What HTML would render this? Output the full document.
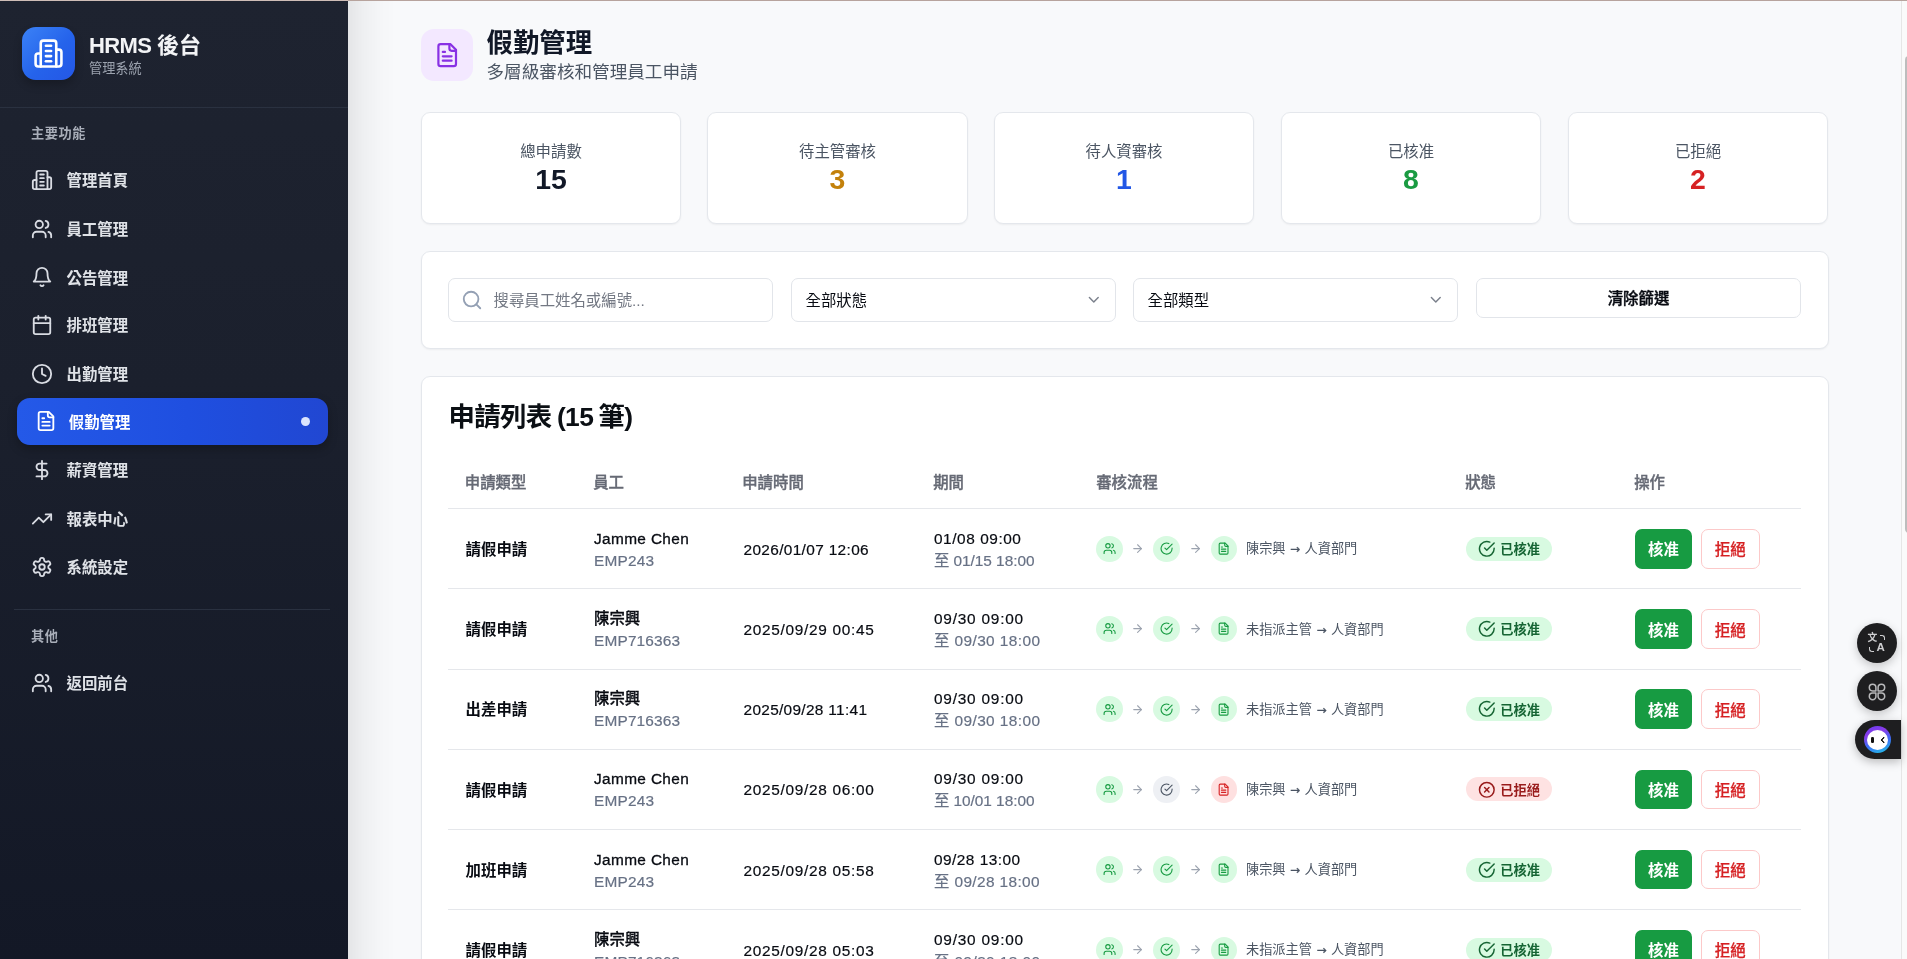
<!DOCTYPE html>
<html lang="zh-Hant">
<head>
<meta charset="utf-8">
<title>HRMS 後台 - 假勤管理</title>
<style>
*{box-sizing:border-box;margin:0;padding:0}
html,body{width:1907px;height:959px;overflow:hidden}
body{position:relative;background:#f8f9fb;font-family:"Liberation Sans","Noto Sans CJK TC",sans-serif;color:#0f1419;-webkit-font-smoothing:antialiased}
svg{display:block}
.ic{fill:none;stroke:currentColor;stroke-width:2;stroke-linecap:round;stroke-linejoin:round}
.abs{position:absolute}
/* top line */
#topline{position:absolute;left:0;top:0;width:1907px;height:1px;background:linear-gradient(90deg,#cfbdb7 0,#cfbdb7 348px,#b7a39d 348px,#b7a39d 100%);z-index:50}
/* sidebar */
#sb{will-change:transform;position:absolute;left:0;top:0;width:348px;height:959px;background:linear-gradient(180deg,#1e2330 0%,#1b202d 40%,#131826 100%);z-index:10}
#sbshadow{position:absolute;left:348px;top:0;width:60px;height:959px;background:linear-gradient(90deg,rgba(0,0,0,.08) 0%,rgba(0,0,0,.04) 25%,rgba(0,0,0,.012) 55%,rgba(0,0,0,0) 80%);z-index:9;pointer-events:none}
#logo{position:absolute;left:22px;top:27px;width:53px;height:53px;border-radius:14px;background:linear-gradient(135deg,#3b82f6 0%,#2563eb 55%,#2457e6 100%);box-shadow:0 5px 9px rgba(0,0,0,.22);color:#fff}
#logo svg{position:absolute;left:11px;top:11px;width:31px;height:31px}
#brand{position:absolute;left:89px;top:32.5px;font-size:22px;line-height:26px;font-weight:700;color:#f3f4f6;white-space:nowrap;letter-spacing:-.6px}
#brand span{letter-spacing:0}
#brandsub{position:absolute;left:89px;top:60px;font-size:13.2px;line-height:18px;color:#9ca3af;white-space:nowrap}
#sbline1{position:absolute;left:0;top:107px;width:348px;height:1px;background:#2a3140}
.sec{position:absolute;left:31px;font-size:13.2px;line-height:18px;font-weight:700;color:#a9aeb9;white-space:nowrap;letter-spacing:.6px;margin-top:1.2px}
.nav{position:absolute;left:17px;width:311px;height:47px;border-radius:13px;color:#d9dce3}
.nav svg{position:absolute;left:14px;top:12.5px;width:22px;height:22px}
.nav b{position:absolute;left:49.5px;top:12.8px;font-size:15.4px;line-height:23px;font-weight:700;white-space:nowrap;color:#dfe2e7}
.nav.on{background:linear-gradient(90deg,#2459e8 0%,#1f4fe0 55%,#2147d2 100%);color:#fff;box-shadow:0 4px 10px rgba(0,0,0,.25)}
.nav.on svg{left:17.5px;top:12.2px}
.nav.on b{left:51.8px;color:#fff}
.nav.on i{position:absolute;left:284.4px;top:19px;width:9px;height:9px;border-radius:50%;background:#dbe4fd}
#sbline2{position:absolute;left:14px;top:609px;width:316px;height:1px;background:#2a3140}
/* scrollbar + floaters */
#sbar{position:absolute;left:1901px;top:0;width:6px;height:959px;background:#fafafa;border-left:1px solid #e6e6e6;z-index:20}
#sbar i{position:absolute;left:3px;top:56px;width:10px;height:477px;border-radius:4px;background:#bdbdbd}
.fb{position:absolute;left:1857px;width:40px;height:40px;border-radius:50%;background:#1e1e20;box-shadow:0 3px 10px rgba(0,0,0,.22);z-index:30;color:#cfcfd1;will-change:transform}
.fb svg{position:absolute;left:10px;top:10.5px;width:20px;height:20px}
.fb span{position:absolute;font-family:"Liberation Sans","Noto Sans CJK TC",sans-serif;line-height:1;font-weight:700}
.fb .t1{left:10.5px;top:10.3px;font-size:9.8px}
.fb .t2{left:19.5px;top:18.5px;font-size:11.5px}
.fb u{position:absolute;width:5px;height:5px;border:1.5px solid #cfcfd1;text-decoration:none}
.fb .k1{left:23px;top:11.5px;border-left:0;border-bottom:0;border-top-right-radius:3px}
.fb .k2{left:11.5px;top:23.5px;border-right:0;border-top:0;border-bottom-left-radius:3px}
#pill{position:absolute;left:1855px;top:720px;width:46px;height:38.5px;border-radius:19.5px 0 0 19.5px;background:#1e1e20;box-shadow:0 3px 10px rgba(0,0,0,.25);z-index:30}
#av{position:absolute;left:9px;top:6px;width:27px;height:27px;border-radius:50%;background:linear-gradient(160deg,#6b3df0 5%,#8a3be8 30%,#3b6cf6 60%,#22c1e6 95%)}
#av b{position:absolute;left:3px;top:3.5px;width:21px;height:20px;border-radius:50%;background:#fff}
#av i{position:absolute;left:7px;top:11px;width:3.2px;height:5.6px;border-radius:1.2px;background:#111}
#av em{position:absolute;left:16.5px;top:10.8px;width:5.5px;height:5.5px;border-left:2.2px solid #111;border-bottom:2.2px solid #111;transform:rotate(45deg) scale(.85);border-radius:1px}
/* main */
#main{position:absolute;left:0;top:0;width:1901px;height:959px;overflow:hidden;will-change:transform}
#picon{position:absolute;left:421px;top:29px;width:52px;height:52px;border-radius:13px;background:#f3e8ff;color:#8831e4}
#picon svg{position:absolute;left:13px;top:13px;width:26.4px;height:26.4px}
#ptitle{position:absolute;left:486.5px;top:26.2px;font-size:26.4px;line-height:35px;font-weight:700;color:#111827;white-space:nowrap}
#psub{position:absolute;left:486.5px;top:59.2px;font-size:17.6px;line-height:26px;color:#4b5563;white-space:nowrap}
.card{position:absolute;background:#fff;border:1px solid #e4e7ec;border-radius:9px;box-shadow:0 1px 2px rgba(0,0,0,.05)}
.stat{top:112px;height:112px;text-align:center}
.sl{position:absolute;left:0;right:0;top:28px;font-size:15.4px;line-height:22px;color:#4b5563}
.sv{position:absolute;left:0;right:0;top:49px;font-size:28.4px;line-height:35px;font-weight:700}
#filter{left:421px;top:251px;width:1408px;height:98px}
.inp{position:absolute;top:26px;width:325px;height:44px;border:1px solid #e2e5ea;border-radius:7px;background:#fff;font-size:15.4px;line-height:22px;color:#080b12}
.inp .sico{position:absolute;left:12px;top:10px;width:22px;height:22px;color:#94a0b4}
.inp .sico svg{width:22px;height:22px}
.inp .ph{position:absolute;left:44.5px;top:11px;color:#737883;white-space:nowrap}
.inp .st{position:absolute;left:13.5px;top:11px;white-space:nowrap}
.inp .chev{position:absolute;right:12.2px;top:11.7px;width:17.6px;height:17.6px;color:#7b818c}
.inp.btn{height:40px;text-align:center;font-weight:500;line-height:40.5px;-webkit-text-stroke:.35px currentColor}
#list{left:421px;top:376px;width:1408px;height:700px;border-bottom-left-radius:0;border-bottom-right-radius:0}
#ltitle{position:absolute;left:26.5px;top:23px;font-size:26.4px;line-height:35px;font-weight:700;color:#0b0f14;white-space:nowrap;letter-spacing:-.6px;word-spacing:-1.5px}
#thead{position:absolute;left:26px;top:79px;width:1353px;height:53px;border-bottom:1px solid #e5e7eb;font-size:15.4px;color:#666a75;font-weight:500;-webkit-text-stroke:.35px currentColor}
#thead span{position:absolute;top:15.1px;margin-left:-.8px;line-height:23px;white-space:nowrap}
.row{position:absolute;left:26px;width:1353px;height:80.2px;border-bottom:1px solid #e5e7eb;font-size:15.4px;color:#080b12}
.row span{position:absolute;white-space:nowrap;line-height:22px}
.c1{left:17.6px;top:29.9px;font-weight:700}
.nm{left:146px;top:18.6px;font-weight:500;-webkit-text-stroke:.3px currentColor}
.nm.cj{font-weight:500;-webkit-text-stroke:.3px currentColor;top:18.4px}
.em{left:146px;top:40.6px;color:#677185;-webkit-text-stroke:.2px currentColor}
.ts{left:295.5px;top:29.6px;-webkit-text-stroke:.2px currentColor}
.p1{left:486px;top:18.6px;-webkit-text-stroke:.2px currentColor}
.p2{left:486px;top:40.6px;color:#677185;-webkit-text-stroke:.2px currentColor}
.fc{top:26.4px;width:26.4px;height:26.4px;border-radius:50%}
.fc svg{position:absolute;left:6.6px;top:6.6px;width:13.2px;height:13.2px}
.f1{left:648px;width:27px}.f1 svg{left:7.1px}
.f2{left:705px;width:27px}.f2 svg{left:7.3px}
.f3{left:762.9px}
.ft i{font-family:"DejaVu Sans",sans-serif;font-style:normal;font-size:12px;margin:0 .8px;-webkit-text-stroke:.3px currentColor}
.cg{background:#d8fae1;color:#179b42}
.cx{background:#eef0f4;color:#4b5563}
.cr{background:#fee0e0;color:#d62123}
.ar{position:absolute;top:33px;width:13.2px;height:13.2px;color:#9ca3af}
.a1{left:682.7px}.a2{left:740.9px}
.ft{left:798px;top:30.2px;font-size:13.2px;line-height:20px!important;color:#4b5563}
.bd{left:1018px;top:27.5px;height:24.2px;width:85.8px;border-radius:13px}
.bd svg{position:absolute;left:11.8px;top:3.3px;width:17.6px;height:17.6px}
.bd b{position:absolute;left:34.3px;top:3.5px;font-size:13.2px;line-height:20px;font-weight:700;white-space:nowrap}
.bd.ok{background:#d8fae1;color:#166534}
.bd.no{background:#fee2e2;color:#991b1b}
.b1{left:1187px;top:19.8px;width:57px;height:39.6px;border-radius:7px;background:#179b42;color:#fff;text-align:center;line-height:39.6px!important;padding-top:1.4px;font-weight:700}
.b2{left:1253px;top:19.8px;width:58.5px;height:39.6px;border-radius:7px;background:#fff;border:1px solid #fcc9c9;color:#d62123;text-align:center;line-height:37.6px!important;padding-top:1.4px;font-weight:500;-webkit-text-stroke:.25px currentColor}
</style>
</head>
<body>
<div id="topline"></div>
<div id="sbshadow"></div>
<aside id="sb">
  <div id="logo"><svg class="ic" viewBox="0 0 24 24"><path d="M6 22V4a2 2 0 0 1 2-2h8a2 2 0 0 1 2 2v18Z"/><path d="M6 12H4a2 2 0 0 0-2 2v6a2 2 0 0 0 2 2h2"/><path d="M18 9h2a2 2 0 0 1 2 2v9a2 2 0 0 1-2 2h-2"/><path d="M10 6h4"/><path d="M10 10h4"/><path d="M10 14h4"/><path d="M10 18h4"/></svg></div>
  <div id="brand">HRMS <span>後台</span></div>
  <div id="brandsub">管理系統</div>
  <div id="sbline1"></div>
  <div class="sec" style="top:124px">主要功能</div>

  <div class="nav" style="top:156.3px"><svg class="ic" viewBox="0 0 24 24"><path d="M6 22V4a2 2 0 0 1 2-2h8a2 2 0 0 1 2 2v18Z"/><path d="M6 12H4a2 2 0 0 0-2 2v6a2 2 0 0 0 2 2h2"/><path d="M18 9h2a2 2 0 0 1 2 2v9a2 2 0 0 1-2 2h-2"/><path d="M10 6h4"/><path d="M10 10h4"/><path d="M10 14h4"/><path d="M10 18h4"/></svg><b>管理首頁</b></div>
  <div class="nav" style="top:205.4px"><svg class="ic" viewBox="0 0 24 24"><path d="M16 21v-2a4 4 0 0 0-4-4H6a4 4 0 0 0-4 4v2"/><circle cx="9" cy="7" r="4"/><path d="M22 21v-2a4 4 0 0 0-3-3.87"/><path d="M16 3.13a4 4 0 0 1 0 7.75"/></svg><b>員工管理</b></div>
  <div class="nav" style="top:253.8px"><svg class="ic" viewBox="0 0 24 24"><path d="M6 8a6 6 0 0 1 12 0c0 7 3 9 3 9H3s3-2 3-9"/><path d="M10.3 21a1.94 1.94 0 0 0 3.4 0"/></svg><b>公告管理</b></div>
  <div class="nav" style="top:301.3px"><svg class="ic" viewBox="0 0 24 24"><path d="M8 2v4"/><path d="M16 2v4"/><rect width="18" height="18" x="3" y="4" rx="2"/><path d="M3 10h18"/></svg><b>排班管理</b></div>
  <div class="nav" style="top:350.6px"><svg class="ic" viewBox="0 0 24 24"><circle cx="12" cy="12" r="10"/><polyline points="12 6 12 12 16 14"/></svg><b>出勤管理</b></div>
  <div class="nav on" style="top:398px"><svg class="ic" viewBox="0 0 24 24"><path d="M15 2H6a2 2 0 0 0-2 2v16a2 2 0 0 0 2 2h12a2 2 0 0 0 2-2V7Z"/><path d="M14 2v4a2 2 0 0 0 2 2h4"/><path d="M10 9H8"/><path d="M16 13H8"/><path d="M16 17H8"/></svg><b>假勤管理</b><i></i></div>
  <div class="nav" style="top:446.6px"><svg class="ic" viewBox="0 0 24 24"><line x1="12" x2="12" y1="2" y2="22"/><path d="M17 5H9.5a3.5 3.5 0 0 0 0 7h5a3.5 3.5 0 0 1 0 7H6"/></svg><b>薪資管理</b></div>
  <div class="nav" style="top:495.2px"><svg class="ic" viewBox="0 0 24 24"><polyline points="22 7 13.5 15.5 8.5 10.5 2 17"/><polyline points="16 7 22 7 22 13"/></svg><b>報表中心</b></div>
  <div class="nav" style="top:543.4px"><svg class="ic" viewBox="0 0 24 24"><path d="M12.22 2h-.44a2 2 0 0 0-2 2v.18a2 2 0 0 1-1 1.73l-.43.25a2 2 0 0 1-2 0l-.15-.08a2 2 0 0 0-2.73.73l-.22.38a2 2 0 0 0 .73 2.73l.15.1a2 2 0 0 1 1 1.72v.51a2 2 0 0 1-1 1.74l-.15.09a2 2 0 0 0-.73 2.73l.22.38a2 2 0 0 0 2.73.73l.15-.08a2 2 0 0 1 2 0l.43.25a2 2 0 0 1 1 1.73V20a2 2 0 0 0 2 2h.44a2 2 0 0 0 2-2v-.18a2 2 0 0 1 1-1.73l.43-.25a2 2 0 0 1 2 0l.15.08a2 2 0 0 0 2.73-.73l.22-.39a2 2 0 0 0-.73-2.73l-.15-.08a2 2 0 0 1-1-1.74v-.5a2 2 0 0 1 1-1.74l.15-.09a2 2 0 0 0 .73-2.73l-.22-.38a2 2 0 0 0-2.73-.73l-.15.08a2 2 0 0 1-2 0l-.43-.25a2 2 0 0 1-1-1.73V4a2 2 0 0 0-2-2z"/><circle cx="12" cy="12" r="3"/></svg><b>系統設定</b></div>

  <div id="sbline2"></div>
  <div class="sec" style="top:627px">其他</div>
  <div class="nav" style="top:659px"><svg class="ic" viewBox="0 0 24 24"><path d="M16 21v-2a4 4 0 0 0-4-4H6a4 4 0 0 0-4 4v2"/><circle cx="9" cy="7" r="4"/><path d="M22 21v-2a4 4 0 0 0-3-3.87"/><path d="M16 3.13a4 4 0 0 1 0 7.75"/></svg><b>返回前台</b></div>
</aside>

<main id="main">
<!--MAIN-->
<div id="picon"><svg class="ic" viewBox="0 0 24 24"><path d="M15 2H6a2 2 0 0 0-2 2v16a2 2 0 0 0 2 2h12a2 2 0 0 0 2-2V7Z"/><path d="M14 2v4a2 2 0 0 0 2 2h4"/><path d="M10 9H8"/><path d="M16 13H8"/><path d="M16 17H8"/></svg></div>
<h1 id="ptitle">假勤管理</h1>
<p id="psub">多層級審核和管理員工申請</p>
<div class="card stat" style="left:421px;width:260px"><div class="sl">總申請數</div><div class="sv" style="color:#111827">15</div></div>
<div class="card stat" style="left:707px;width:261px"><div class="sl">待主管審核</div><div class="sv" style="color:#c3810b">3</div></div>
<div class="card stat" style="left:994px;width:260px"><div class="sl">待人資審核</div><div class="sv" style="color:#2257e6">1</div></div>
<div class="card stat" style="left:1281px;width:260px"><div class="sl">已核准</div><div class="sv" style="color:#1a9b42">8</div></div>
<div class="card stat" style="left:1568px;width:260px"><div class="sl">已拒絕</div><div class="sv" style="color:#d62123">2</div></div>
<div class="card" id="filter">
<div class="inp" style="left:26px"><span class="sico"><svg class="ic" viewBox="0 0 24 24"><circle cx="11" cy="11" r="8"/><path d="m21 21-4.3-4.3"/></svg></span><span class="ph">搜尋員工姓名或編號...</span></div>
<div class="inp" style="left:369px"><span class="st">全部狀態</span><svg class="ic chev" viewBox="0 0 24 24"><path d="m6 9 6 6 6-6"/></svg></div>
<div class="inp" style="left:711px"><span class="st">全部類型</span><svg class="ic chev" viewBox="0 0 24 24"><path d="m6 9 6 6 6-6"/></svg></div>
<div class="inp btn" style="left:1054px"><span>清除篩選</span></div>
</div>
<div class="card" id="list">
<h2 id="ltitle">申請列表 (15 筆)</h2>
<div id="thead"><span style="left:17.6px">申請類型</span><span style="left:146px">員工</span><span style="left:295px">申請時間</span><span style="left:486px">期間</span><span style="left:649px">審核流程</span><span style="left:1018px">狀態</span><span style="left:1187px">操作</span></div>
<div class="row" style="top:132.2px">
<span class="c1">請假申請</span>
<span class="nm" style="letter-spacing:0.36px">Jamme Chen</span><span class="em" style="letter-spacing:0.2px">EMP243</span>
<span class="ts" style="letter-spacing:0.353px">2026/01/07 12:06</span>
<span class="p1" style="letter-spacing:0.56px">01/08 09:00</span><span class="p2" style="letter-spacing:-0.042px">至 01/15 18:00</span>
<span class="fc f1 cg"><svg class="ic" viewBox="0 0 24 24"><path d="M16 21v-2a4 4 0 0 0-4-4H6a4 4 0 0 0-4 4v2"/><circle cx="9" cy="7" r="4"/><path d="M22 21v-2a4 4 0 0 0-3-3.87"/><path d="M16 3.13a4 4 0 0 1 0 7.75"/></svg></span><svg class="ic ar a1" viewBox="0 0 24 24"><path d="M5 12h14"/><path d="m12 5 7 7-7 7"/></svg>
<span class="fc f2 cg"><svg class="ic" viewBox="0 0 24 24"><path d="M22 11.08V12a10 10 0 1 1-5.93-9.14"/><path d="m9 11 3 3L22 4"/></svg></span><svg class="ic ar a2" viewBox="0 0 24 24"><path d="M5 12h14"/><path d="m12 5 7 7-7 7"/></svg>
<span class="fc f3 cg"><svg class="ic" viewBox="0 0 24 24"><path d="M15 2H6a2 2 0 0 0-2 2v16a2 2 0 0 0 2 2h12a2 2 0 0 0 2-2V7Z"/><path d="M14 2v4a2 2 0 0 0 2 2h4"/><path d="M10 9H8"/><path d="M16 13H8"/><path d="M16 17H8"/></svg></span>
<span class="ft">陳宗興 <i>→</i> 人資部門</span>
<span class="bd ok"><svg class="ic" viewBox="0 0 24 24"><path d="M22 11.08V12a10 10 0 1 1-5.93-9.14"/><path d="m9 11 3 3L22 4"/></svg><b>已核准</b></span>
<span class="b1">核准</span><span class="b2">拒絕</span>
</div>
<div class="row" style="top:212.4px">
<span class="c1">請假申請</span>
<span class="nm cj">陳宗興</span><span class="em" style="letter-spacing:0.175px">EMP716363</span>
<span class="ts" style="letter-spacing:0.7px">2025/09/29 00:45</span>
<span class="p1" style="letter-spacing:0.78px">09/30 09:00</span><span class="p2" style="letter-spacing:0.417px">至 09/30 18:00</span>
<span class="fc f1 cg"><svg class="ic" viewBox="0 0 24 24"><path d="M16 21v-2a4 4 0 0 0-4-4H6a4 4 0 0 0-4 4v2"/><circle cx="9" cy="7" r="4"/><path d="M22 21v-2a4 4 0 0 0-3-3.87"/><path d="M16 3.13a4 4 0 0 1 0 7.75"/></svg></span><svg class="ic ar a1" viewBox="0 0 24 24"><path d="M5 12h14"/><path d="m12 5 7 7-7 7"/></svg>
<span class="fc f2 cg"><svg class="ic" viewBox="0 0 24 24"><path d="M22 11.08V12a10 10 0 1 1-5.93-9.14"/><path d="m9 11 3 3L22 4"/></svg></span><svg class="ic ar a2" viewBox="0 0 24 24"><path d="M5 12h14"/><path d="m12 5 7 7-7 7"/></svg>
<span class="fc f3 cg"><svg class="ic" viewBox="0 0 24 24"><path d="M15 2H6a2 2 0 0 0-2 2v16a2 2 0 0 0 2 2h12a2 2 0 0 0 2-2V7Z"/><path d="M14 2v4a2 2 0 0 0 2 2h4"/><path d="M10 9H8"/><path d="M16 13H8"/><path d="M16 17H8"/></svg></span>
<span class="ft">未指派主管 <i>→</i> 人資部門</span>
<span class="bd ok"><svg class="ic" viewBox="0 0 24 24"><path d="M22 11.08V12a10 10 0 1 1-5.93-9.14"/><path d="m9 11 3 3L22 4"/></svg><b>已核准</b></span>
<span class="b1">核准</span><span class="b2">拒絕</span>
</div>
<div class="row" style="top:292.6px">
<span class="c1">出差申請</span>
<span class="nm cj">陳宗興</span><span class="em" style="letter-spacing:0.175px">EMP716363</span>
<span class="ts" style="letter-spacing:0.32px">2025/09/28 11:41</span>
<span class="p1" style="letter-spacing:0.78px">09/30 09:00</span><span class="p2" style="letter-spacing:0.417px">至 09/30 18:00</span>
<span class="fc f1 cg"><svg class="ic" viewBox="0 0 24 24"><path d="M16 21v-2a4 4 0 0 0-4-4H6a4 4 0 0 0-4 4v2"/><circle cx="9" cy="7" r="4"/><path d="M22 21v-2a4 4 0 0 0-3-3.87"/><path d="M16 3.13a4 4 0 0 1 0 7.75"/></svg></span><svg class="ic ar a1" viewBox="0 0 24 24"><path d="M5 12h14"/><path d="m12 5 7 7-7 7"/></svg>
<span class="fc f2 cg"><svg class="ic" viewBox="0 0 24 24"><path d="M22 11.08V12a10 10 0 1 1-5.93-9.14"/><path d="m9 11 3 3L22 4"/></svg></span><svg class="ic ar a2" viewBox="0 0 24 24"><path d="M5 12h14"/><path d="m12 5 7 7-7 7"/></svg>
<span class="fc f3 cg"><svg class="ic" viewBox="0 0 24 24"><path d="M15 2H6a2 2 0 0 0-2 2v16a2 2 0 0 0 2 2h12a2 2 0 0 0 2-2V7Z"/><path d="M14 2v4a2 2 0 0 0 2 2h4"/><path d="M10 9H8"/><path d="M16 13H8"/><path d="M16 17H8"/></svg></span>
<span class="ft">未指派主管 <i>→</i> 人資部門</span>
<span class="bd ok"><svg class="ic" viewBox="0 0 24 24"><path d="M22 11.08V12a10 10 0 1 1-5.93-9.14"/><path d="m9 11 3 3L22 4"/></svg><b>已核准</b></span>
<span class="b1">核准</span><span class="b2">拒絕</span>
</div>
<div class="row" style="top:372.8px">
<span class="c1">請假申請</span>
<span class="nm" style="letter-spacing:0.36px">Jamme Chen</span><span class="em" style="letter-spacing:0.2px">EMP243</span>
<span class="ts" style="letter-spacing:0.7px">2025/09/28 06:00</span>
<span class="p1" style="letter-spacing:0.78px">09/30 09:00</span><span class="p2" style="letter-spacing:-0.042px">至 10/01 18:00</span>
<span class="fc f1 cg"><svg class="ic" viewBox="0 0 24 24"><path d="M16 21v-2a4 4 0 0 0-4-4H6a4 4 0 0 0-4 4v2"/><circle cx="9" cy="7" r="4"/><path d="M22 21v-2a4 4 0 0 0-3-3.87"/><path d="M16 3.13a4 4 0 0 1 0 7.75"/></svg></span><svg class="ic ar a1" viewBox="0 0 24 24"><path d="M5 12h14"/><path d="m12 5 7 7-7 7"/></svg>
<span class="fc f2 cx"><svg class="ic" viewBox="0 0 24 24"><path d="M22 11.08V12a10 10 0 1 1-5.93-9.14"/><path d="m9 11 3 3L22 4"/></svg></span><svg class="ic ar a2" viewBox="0 0 24 24"><path d="M5 12h14"/><path d="m12 5 7 7-7 7"/></svg>
<span class="fc f3 cr"><svg class="ic" viewBox="0 0 24 24"><path d="M15 2H6a2 2 0 0 0-2 2v16a2 2 0 0 0 2 2h12a2 2 0 0 0 2-2V7Z"/><path d="M14 2v4a2 2 0 0 0 2 2h4"/><path d="M10 9H8"/><path d="M16 13H8"/><path d="M16 17H8"/></svg></span>
<span class="ft">陳宗興 <i>→</i> 人資部門</span>
<span class="bd no"><svg class="ic" viewBox="0 0 24 24"><circle cx="12" cy="12" r="10"/><path d="m15 9-6 6"/><path d="m9 9 6 6"/></svg><b>已拒絕</b></span>
<span class="b1">核准</span><span class="b2">拒絕</span>
</div>
<div class="row" style="top:453.0px">
<span class="c1">加班申請</span>
<span class="nm" style="letter-spacing:0.36px">Jamme Chen</span><span class="em" style="letter-spacing:0.2px">EMP243</span>
<span class="ts" style="letter-spacing:0.7px">2025/09/28 05:58</span>
<span class="p1" style="letter-spacing:0.48px">09/28 13:00</span><span class="p2" style="letter-spacing:0.383px">至 09/28 18:00</span>
<span class="fc f1 cg"><svg class="ic" viewBox="0 0 24 24"><path d="M16 21v-2a4 4 0 0 0-4-4H6a4 4 0 0 0-4 4v2"/><circle cx="9" cy="7" r="4"/><path d="M22 21v-2a4 4 0 0 0-3-3.87"/><path d="M16 3.13a4 4 0 0 1 0 7.75"/></svg></span><svg class="ic ar a1" viewBox="0 0 24 24"><path d="M5 12h14"/><path d="m12 5 7 7-7 7"/></svg>
<span class="fc f2 cg"><svg class="ic" viewBox="0 0 24 24"><path d="M22 11.08V12a10 10 0 1 1-5.93-9.14"/><path d="m9 11 3 3L22 4"/></svg></span><svg class="ic ar a2" viewBox="0 0 24 24"><path d="M5 12h14"/><path d="m12 5 7 7-7 7"/></svg>
<span class="fc f3 cg"><svg class="ic" viewBox="0 0 24 24"><path d="M15 2H6a2 2 0 0 0-2 2v16a2 2 0 0 0 2 2h12a2 2 0 0 0 2-2V7Z"/><path d="M14 2v4a2 2 0 0 0 2 2h4"/><path d="M10 9H8"/><path d="M16 13H8"/><path d="M16 17H8"/></svg></span>
<span class="ft">陳宗興 <i>→</i> 人資部門</span>
<span class="bd ok"><svg class="ic" viewBox="0 0 24 24"><path d="M22 11.08V12a10 10 0 1 1-5.93-9.14"/><path d="m9 11 3 3L22 4"/></svg><b>已核准</b></span>
<span class="b1">核准</span><span class="b2">拒絕</span>
</div>
<div class="row" style="top:533.2px">
<span class="c1">請假申請</span>
<span class="nm cj">陳宗興</span><span class="em" style="letter-spacing:0.175px">EMP716363</span>
<span class="ts" style="letter-spacing:0.7px">2025/09/28 05:03</span>
<span class="p1" style="letter-spacing:0.78px">09/30 09:00</span><span class="p2" style="letter-spacing:0.417px">至 09/30 18:00</span>
<span class="fc f1 cg"><svg class="ic" viewBox="0 0 24 24"><path d="M16 21v-2a4 4 0 0 0-4-4H6a4 4 0 0 0-4 4v2"/><circle cx="9" cy="7" r="4"/><path d="M22 21v-2a4 4 0 0 0-3-3.87"/><path d="M16 3.13a4 4 0 0 1 0 7.75"/></svg></span><svg class="ic ar a1" viewBox="0 0 24 24"><path d="M5 12h14"/><path d="m12 5 7 7-7 7"/></svg>
<span class="fc f2 cg"><svg class="ic" viewBox="0 0 24 24"><path d="M22 11.08V12a10 10 0 1 1-5.93-9.14"/><path d="m9 11 3 3L22 4"/></svg></span><svg class="ic ar a2" viewBox="0 0 24 24"><path d="M5 12h14"/><path d="m12 5 7 7-7 7"/></svg>
<span class="fc f3 cg"><svg class="ic" viewBox="0 0 24 24"><path d="M15 2H6a2 2 0 0 0-2 2v16a2 2 0 0 0 2 2h12a2 2 0 0 0 2-2V7Z"/><path d="M14 2v4a2 2 0 0 0 2 2h4"/><path d="M10 9H8"/><path d="M16 13H8"/><path d="M16 17H8"/></svg></span>
<span class="ft">未指派主管 <i>→</i> 人資部門</span>
<span class="bd ok"><svg class="ic" viewBox="0 0 24 24"><path d="M22 11.08V12a10 10 0 1 1-5.93-9.14"/><path d="m9 11 3 3L22 4"/></svg><b>已核准</b></span>
<span class="b1">核准</span><span class="b2">拒絕</span>
</div>
</div>
<!--/MAIN-->
</main>

<!--FLOAT-->
<div id="sbar"><i></i></div>
<div class="fb" style="top:622.8px"><span class="t1">文</span><span class="t2">A</span><u class="k1"></u><u class="k2"></u></div>
<div class="fb" style="top:670.7px"><svg viewBox="0 0 20 20" fill="none" stroke="#b9b9bb" stroke-width="1.5" stroke-linejoin="round"><path id="cl" d="M5.6 2.3a3.3 3.3 0 0 0 0 6.6h3.3V5.6a3.3 3.3 0 0 0-3.3-3.3z"/><path d="M14.4 2.3a3.3 3.3 0 0 1 0 6.6h-3.3V5.6a3.3 3.3 0 0 1 3.3-3.3z"/><path d="M5.6 17.7a3.3 3.3 0 0 1 0-6.6h3.3v3.3a3.3 3.3 0 0 1-3.3 3.3z"/><path d="M14.4 17.7a3.3 3.3 0 0 0 0-6.6h-3.3v3.3a3.3 3.3 0 0 0 3.3 3.3z"/></svg></div>
<div id="pill"><div id="av"><b></b><i></i><em></em></div></div>
<!--/FLOAT-->
</body>
</html>
